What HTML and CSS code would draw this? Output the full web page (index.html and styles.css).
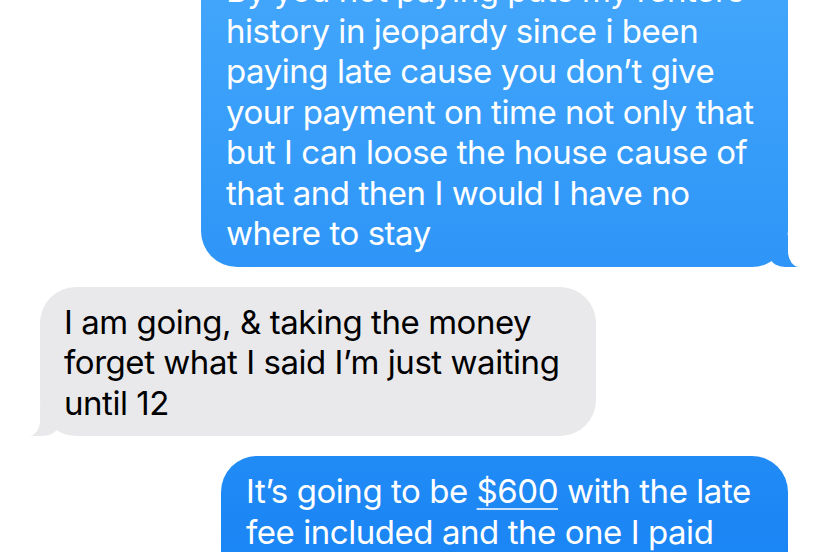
FILE: index.html
```html
<!DOCTYPE html>
<html lang="en">
<head>
    <meta charset="UTF-8">
    <meta name="viewport" content="width=device-width, initial-scale=1.0">
    <title>Messages</title>
    <link rel="stylesheet" href="styles.css">
</head>
<body>
    <!-- Conversation -->
    <div class="thread">
        <div class="bubble sent first tail">
            By you not paying puts my renters<br>
            history in jeopardy since i been<br>
            paying late cause you don’t give<br>
            your payment on time not only that<br>
            but I can loose the house cause of<br>
            that and then I would I have no<br>
            where to stay
        </div>

        <div class="bubble received tail">
            I am going, &amp; taking the money<br>
            forget what I said I’m just waiting<br>
            until 12
        </div>

        <div class="bubble sent last">
            It’s going to be <span class="link">$600</span> with the late<br>
            fee included and the one I paid<br>
            the other day
        </div>
    </div>
</body>
</html>
```

FILE: styles.css
```css
/* Page */
body {
    margin: 0;
    padding: 0;
    background: #fff;
    font-family: Inter, "Noto Sans", sans-serif;
    overflow: hidden;
}

/* Message list */
.thread {
    display: flex;
    flex-direction: column;
    gap: 20px;
    padding: 0 40px;
}

/* Bubbles */
.bubble {
    position: relative;
    box-sizing: border-box;
    padding: 13px 20px 13px 25px;
    border-radius: 36px;
    font-size: 33px;
    line-height: 40.5px;
    letter-spacing: -0.45px;
    white-space: nowrap;
}

.sent {
    align-self: flex-end;
    color: #fff;
    background: linear-gradient(#41a5fb, #1a85f4) fixed;
}

.received {
    align-self: flex-start;
    color: #000;
    background: #e9e9eb;
    width: 556px;
    padding-top: 15px;
    padding-left: 24px;
}

.first {
    width: 587px;
    margin-top: -43px;
}

.last {
    width: 567px;
    padding-top: 15px;
}

/* Tails */
.tail::before,
.tail::after {
    content: "";
    position: absolute;
    bottom: 0;
    height: 32px;
}

.sent.tail::before {
    right: -11px;
    width: 28px;
    background: linear-gradient(#41a5fb, #1a85f4) fixed;
    border-bottom-left-radius: 14px 9px;
}

.sent.tail::after {
    right: -20px;
    width: 20px;
    background: #fff;
    border-bottom-left-radius: 11px 16px;
}

.received.tail::before {
    left: -11px;
    width: 28px;
    background: #e9e9eb;
    border-bottom-right-radius: 14px 9px;
}

.received.tail::after {
    left: -20px;
    width: 20px;
    background: #fff;
    border-bottom-right-radius: 11px 16px;
}

.link {
    text-decoration: underline;
    text-decoration-color: rgba(255, 255, 255, 0.75);
    text-decoration-thickness: 2px;
    text-underline-offset: 5px;
}
```
